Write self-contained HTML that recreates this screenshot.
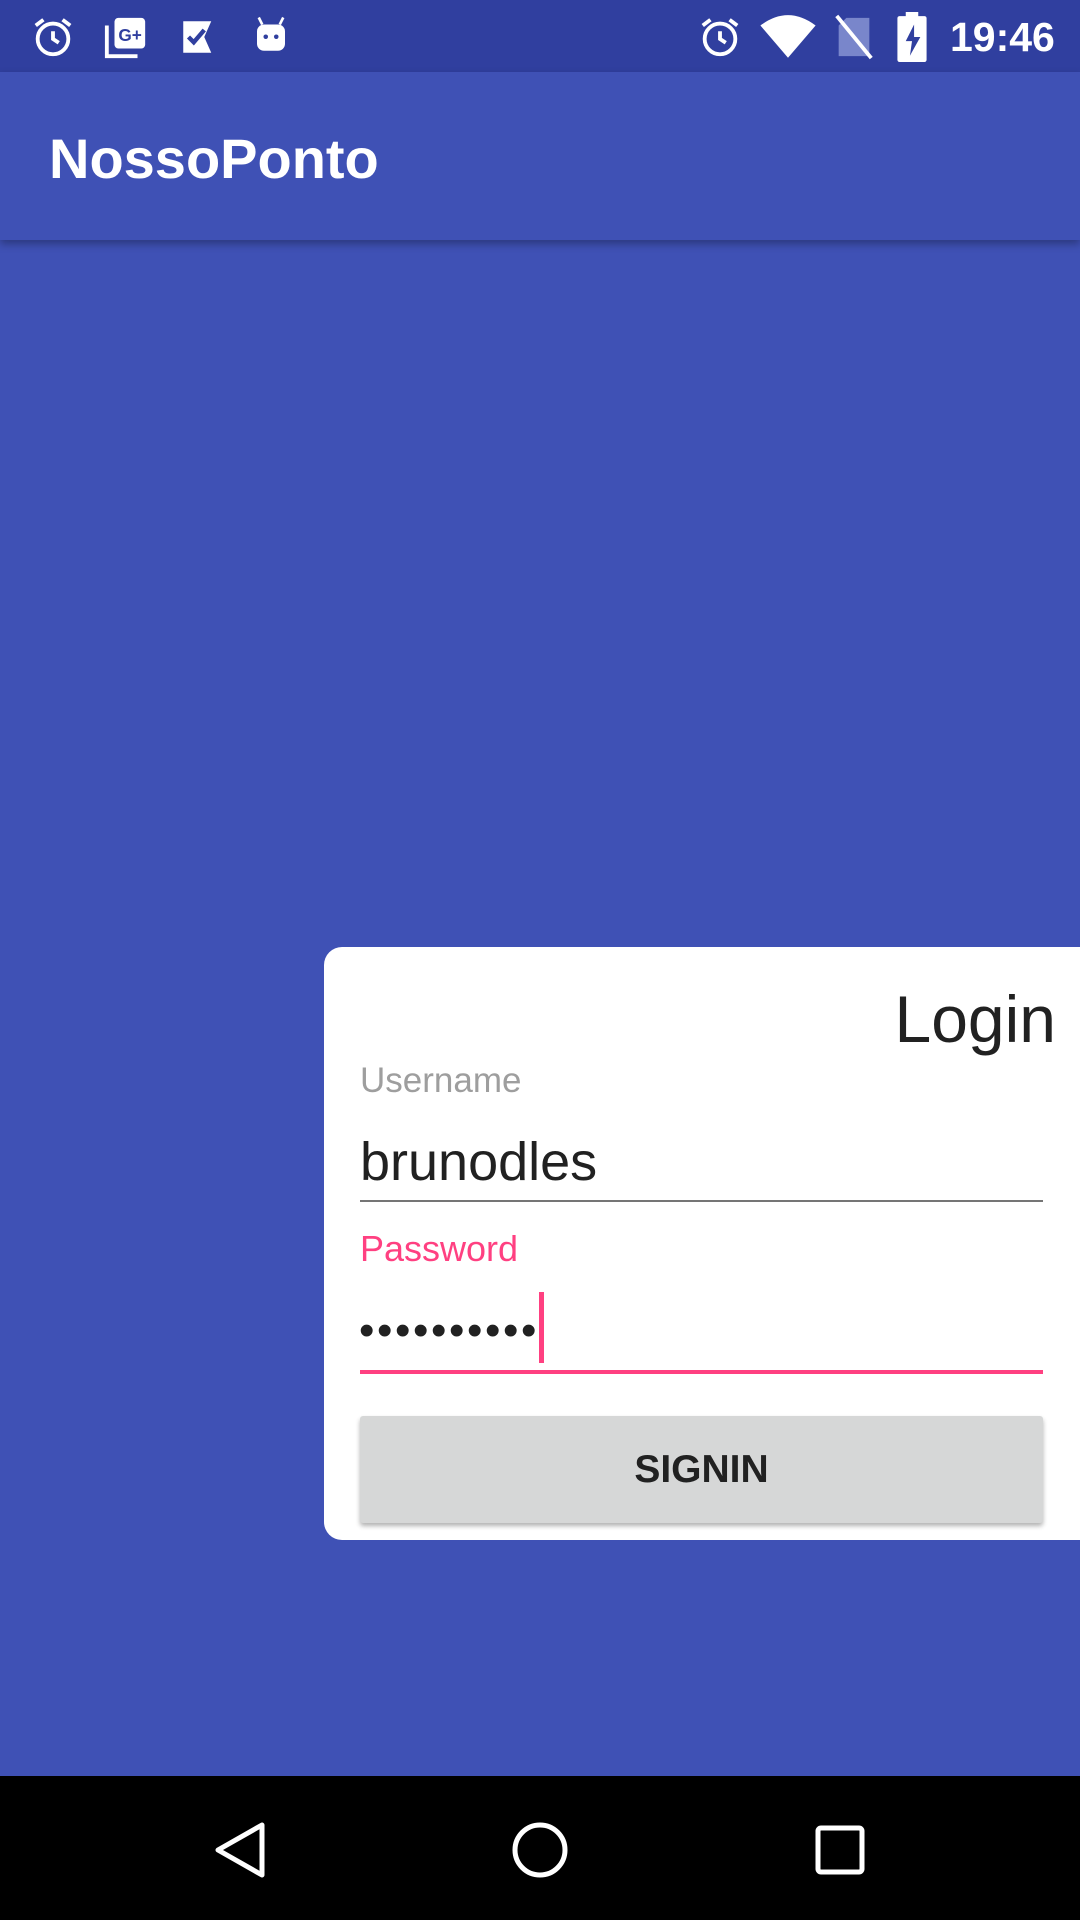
<!DOCTYPE html>
<html><head><meta charset="utf-8"><style>
*{margin:0;padding:0;box-sizing:border-box}
body{width:1080px;height:1920px;background:#3F51B5;font-family:"Liberation Sans",Roboto,sans-serif;position:relative;overflow:hidden}
.status{position:absolute;left:0;top:0;width:1080px;height:72px;background:#303F9F;color:#fff}
.appbar{position:absolute;left:0;top:72px;width:1080px;height:168px;background:#3F51B5;box-shadow:0 4px 8px rgba(0,0,0,.3)}
.title{position:absolute;left:49px;top:125px;font-size:56px;color:#fff;line-height:68px;font-weight:bold}
.card{position:absolute;left:324px;top:947px;width:800px;height:593px;background:#fff;border-radius:18px}
.abs{position:absolute}
.nav{position:absolute;left:0;top:1776px;width:1080px;height:144px;background:#000}
</style></head><body>
<div class="status">
<svg class="abs" style="left:30px;top:14px" width="46" height="46" viewBox="0 0 24 24"><circle cx="12" cy="13" r="8" fill="none" stroke="#fff" stroke-width="2"/><path d="M12 9v4l3 2M3 6l4-3M21 6l-4-3" stroke="#fff" stroke-width="2" fill="none"/></svg>
<svg class="abs" style="left:103px;top:14px" width="46" height="46" viewBox="0 0 24 24"><rect x="6" y="2" width="16" height="16" rx="2" fill="#fff"/><path d="M2 6v16h16" stroke="#fff" stroke-width="2" fill="none"/><text x="8" y="14" font-size="9" font-weight="bold" fill="#303F9F" font-family="Liberation Sans">G+</text></svg>
<svg class="abs" style="left:178px;top:16px" width="42" height="42" viewBox="0 0 24 24"><path d="M3 3h16l-4 9 4 9H3z" fill="#fff"/><path d="M6 12l3 3 6-7" stroke="#303F9F" stroke-width="2.5" fill="none"/></svg>
<svg class="abs" style="left:250px;top:14px" width="42" height="42" viewBox="0 0 24 24"><rect x="4" y="6" width="16" height="15" rx="4" fill="#fff"/><circle cx="9" cy="13" r="1.3" fill="#303F9F"/><circle cx="15" cy="13" r="1.3" fill="#303F9F"/><path d="M7 6L5 2M17 6l2-4" stroke="#fff" stroke-width="1.5"/></svg>
<svg class="abs" style="left:697px;top:14px" width="46" height="46" viewBox="0 0 24 24"><circle cx="12" cy="13" r="8" fill="none" stroke="#fff" stroke-width="2"/><path d="M12 9v4l3 2M3 6l4-3M21 6l-4-3" stroke="#fff" stroke-width="2" fill="none"/></svg>
<svg class="abs" style="left:760px;top:14px" width="56" height="46" viewBox="0 0 24 20"><path d="M12 19L0 5Q12-4 24 5z" fill="#fff"/></svg>
<svg class="abs" style="left:834px;top:14px" width="40" height="46" viewBox="0 0 20 24"><path d="M6 2h12v20H2V6z" fill="#7986CB"/><path d="M1 1l18 22" stroke="#fff" stroke-width="2"/></svg>
<svg class="abs" style="left:896px;top:12px" width="32" height="50" viewBox="0 0 14 24"><rect x="4" y="0" width="6" height="3" fill="#fff"/><rect x="0" y="2" width="14" height="22" rx="1" fill="#fff"/><path d="M8 6l-4 8h3l-1 7 5-9H8z" fill="#303F9F"/></svg>
<div class="abs" style="left:950px;top:12px;font-size:41px;line-height:50px;font-weight:bold">19:46</div>
</div>
<div class="appbar"></div>
<div class="title">NossoPonto</div>
<div class="card">
<div class="abs" style="right:68px;top:35px;font-size:66px;color:#212121;line-height:74px">Login</div>
<div class="abs" style="left:36px;top:114px;font-size:35px;color:#9e9e9e">Username</div>
<div class="abs" style="left:36px;top:184px;font-size:54px;color:#212121">brunodles</div>
<div class="abs" style="left:36px;top:253px;width:683px;height:2px;background:#757575"></div>
<div class="abs" style="left:36px;top:281px;font-size:36px;color:#FF4081">Password</div>
<div class="abs" style="left:35px;top:359px;font-size:44px;color:#212121;letter-spacing:2.6px">••••••••••</div>
<div class="abs" style="left:215px;top:345px;width:5px;height:71px;background:#FF4081"></div>
<div class="abs" style="left:36px;top:423px;width:683px;height:4px;background:#FF4081"></div>
<div class="abs" style="left:36px;top:469px;width:683px;height:107px;background:#D6D7D7;border-radius:3px;box-shadow:0 3px 5px rgba(0,0,0,.3);text-align:center;line-height:107px;font-size:39px;font-weight:bold;color:#212121">SIGNIN</div>
</div>
<div class="nav">
<svg class="abs" style="left:212px;top:44px" width="56" height="60" viewBox="0 0 56 60"><path d="M50 5L6 30l44 25z" fill="none" stroke="#fff" stroke-width="5" stroke-linejoin="round"/></svg>
<svg class="abs" style="left:510px;top:44px" width="60" height="60"><circle cx="30" cy="30" r="25" fill="none" stroke="#fff" stroke-width="5"/></svg>
<svg class="abs" style="left:814px;top:48px" width="52" height="52"><rect x="4" y="4" width="44" height="44" rx="3" fill="none" stroke="#fff" stroke-width="5"/></svg>
</div>
</body></html>
